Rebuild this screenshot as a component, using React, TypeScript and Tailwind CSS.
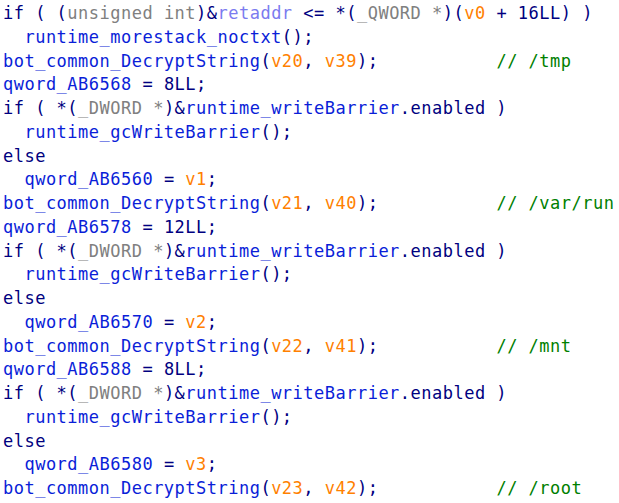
import React from "react";

type Seg = [string, string];
const N = "text-[#000080]";
const B = "text-[#0a1ed8]";
const G = "text-[#808080]";
const O = "text-[#ff8000]";
const C = "text-[#008000]";
const P = "text-[#7b7bef]";

function decrypt(a: string, b: string, cmt: string): Seg[] {
  const base = `bot_common_DecryptString(${a}, ${b});`;
  const spaces = " ".repeat(46 - base.length);
  return [
    [B, "bot_common_DecryptString"],
    [N, "("],
    [O, a],
    [N, ", "],
    [O, b],
    [N, ");" + spaces],
    [C, "// " + cmt],
  ];
}

const ifBarrier: Seg[] = [
  [N, "if ( *("],
  [G, "_DWORD *"],
  [N, ")&"],
  [B, "runtime_writeBarrier"],
  [N, ".enabled )"],
];
const gc: Seg[] = [[B, "  runtime_gcWriteBarrier"], [N, "();"]];
const els: Seg[] = [[N, "else"]];
const assignV = (q: string, v: string): Seg[] => [
  [B, "  " + q],
  [N, " = "],
  [O, v],
  [N, ";"],
];
const assignN = (q: string, n: string): Seg[] => [
  [B, q],
  [N, ` = ${n};`],
];

const lines: Seg[][] = [
  [
    [N, "if ( ("],
    [G, "unsigned int"],
    [N, ")&"],
    [P, "retaddr"],
    [N, " <= *("],
    [G, "_QWORD *"],
    [N, ")("],
    [O, "v0"],
    [N, " + 16LL) )"],
  ],
  [[B, "  runtime_morestack_noctxt"], [N, "();"]],
  decrypt("v20", "v39", "/tmp"),
  assignN("qword_AB6568", "8LL"),
  ifBarrier,
  gc,
  els,
  assignV("qword_AB6560", "v1"),
  decrypt("v21", "v40", "/var/run"),
  assignN("qword_AB6578", "12LL"),
  ifBarrier,
  gc,
  els,
  assignV("qword_AB6570", "v2"),
  decrypt("v22", "v41", "/mnt"),
  assignN("qword_AB6588", "8LL"),
  ifBarrier,
  gc,
  els,
  assignV("qword_AB6580", "v3"),
  decrypt("v23", "v42", "/root"),
];

export default function App() {
  return (
    <div className="w-[619px] h-[503px] overflow-hidden bg-white pl-[3px] pt-[2px]">
      <div
        className="whitespace-pre text-[17px] leading-[23.75px] tracking-[0.49px]"
        style={{ fontFamily: '"DejaVu Sans Mono", monospace' }}
      >
        {lines.map((segs, i) => (
          <div key={i}>
            {segs.map(([cls, t], j) => (
              <span key={j} className={cls}>
                {t}
              </span>
            ))}
          </div>
        ))}
      </div>
    </div>
  );
}
